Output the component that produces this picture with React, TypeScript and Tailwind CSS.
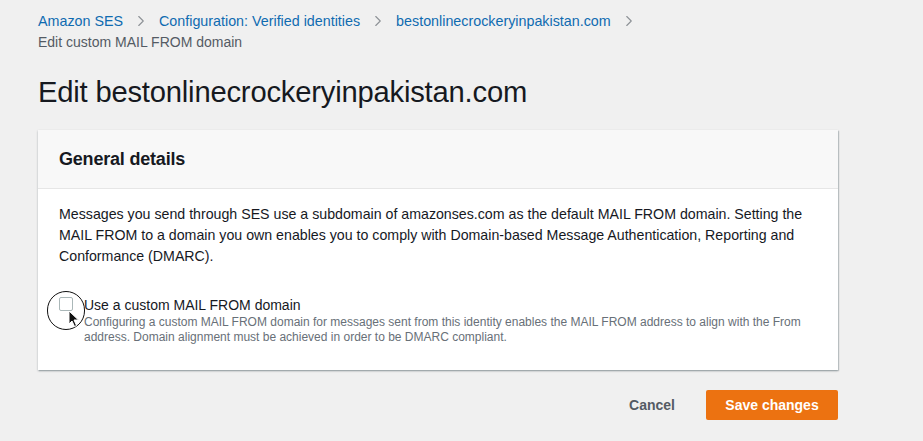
import { ChevronRight } from "lucide-react";

const CRUMBS = [
  "Amazon SES",
  "Configuration: Verified identities",
  "bestonlinecrockeryinpakistan.com",
];

export default function App() {
  return (
    <div className="min-h-[441px] w-[923px] bg-[#f0f0f0] font-['Liberation_Sans',Arial,sans-serif] text-[#16191f]">
      <div className="px-[38px] pt-[11px]">
        {/* Breadcrumbs */}
        <nav className="flex items-center text-[14.3px] leading-[20px]">
          {CRUMBS.map((c) => (
            <span key={c} className="flex items-center">
              <span className="text-[#0f6bb0]">{c}</span>
              <ChevronRight className="mx-[9px] h-[18px] w-[18px] text-[#8d9196]" strokeWidth={1.5} />
            </span>
          ))}
        </nav>
        <div className="mt-[1px] text-[14px] leading-[20px] text-[#545b64]">
          Edit custom MAIL FROM domain
        </div>

        <h1 className="mt-[23px] text-[29.2px] leading-[34px] tracking-[-0.2px] text-[#16191f]">
          Edit bestonlinecrockeryinpakistan.com
        </h1>

        {/* Card */}
        <section className="mt-[21px] w-[800px] bg-white shadow-[0_1px_2px_rgba(0,28,36,0.3),1px_1px_1px_rgba(0,28,36,0.15)]">
          <header className="flex h-[59px] items-center border-b border-[#e6e6e6] bg-[#f8f8f8] px-[21px]">
            <h2 className="text-[18px] font-bold tracking-[-0.2px]">General details</h2>
          </header>
          <div className="relative px-[21px] pb-[25px] pt-[15px]">
            <p className="text-[14.2px] leading-[21px] text-[#16191f]">
              Messages you send through SES use a subdomain of amazonses.com as the default MAIL FROM domain. Setting the MAIL FROM to a domain you own enables you to comply with Domain-based Message Authentication, Reporting and Conformance (DMARC).
            </p>
            <div className="mt-[30px] flex items-start gap-[11px]">
              <span className="h-[14px] w-[14px] shrink-0 rounded-[2px] border border-[#aab7b8] bg-white" />
              <div>
                <div className="text-[14px] leading-[16px] text-[#16191f]">Use a custom MAIL FROM domain</div>
                <div className="mt-[2px] text-[12px] leading-[15px] text-[#687078]">
                  Configuring a custom MAIL FROM domain for messages sent from this identity enables the MAIL FROM address to align with the From address. Domain alignment must be achieved in order to be DMARC compliant.
                </div>
              </div>
            </div>

            {/* Cursor highlight */}
            <div className="pointer-events-none absolute left-[9px] top-[102px] h-[39px] w-[38px] rounded-full border-[1.5px] border-[#111]" />
            <svg
              className="pointer-events-none absolute left-[30px] top-[121px]"
              width="12"
              height="18"
              viewBox="0 0 12 18"
            >
              <path d="M1 1 L1 14 L4 11 L6.5 16.5 L8.5 15.5 L6 10 L10.5 10 Z" fill="#111" stroke="#fff" strokeWidth="1" />
            </svg>
          </div>
        </section>

        {/* Actions */}
        <div className="mt-[20px] flex w-[800px] items-center justify-end gap-[31px]">
          <button className="text-[14px] font-bold text-[#545b64]">Cancel</button>
          <button className="h-[30px] w-[132px] rounded-[2px] bg-[#ec7211] text-[14px] font-bold text-white">
            Save changes
          </button>
        </div>
      </div>
    </div>
  );
}
